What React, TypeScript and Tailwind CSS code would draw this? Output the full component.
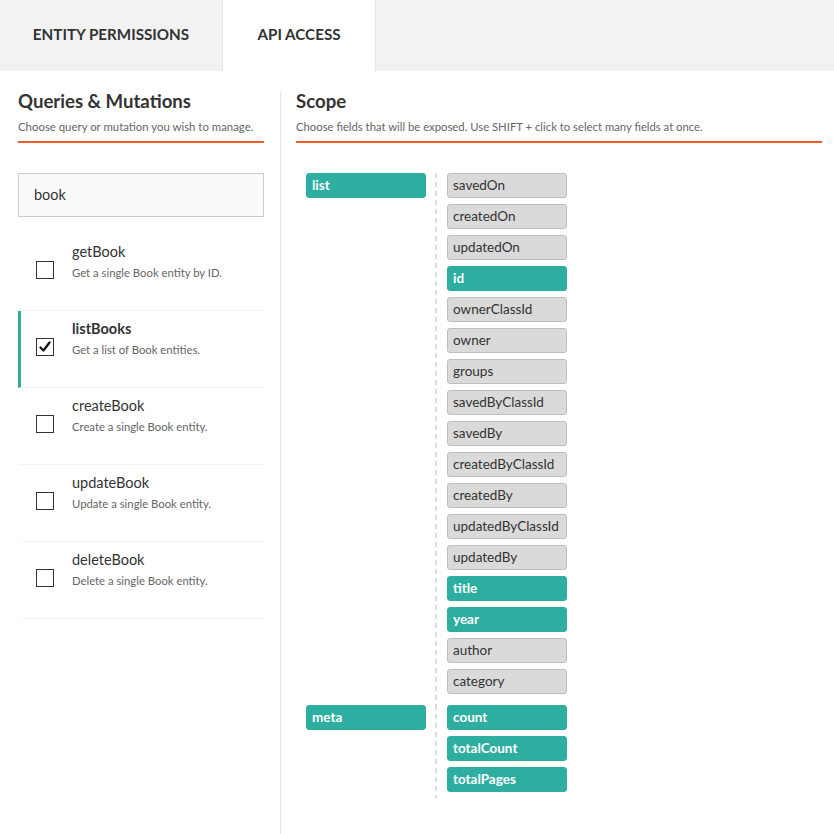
import React from "react";

const groups: { name: string; fields: { n: string; on: boolean }[] }[] = [
  {
    name: "list",
    fields: [
      { n: "savedOn", on: false },
      { n: "createdOn", on: false },
      { n: "updatedOn", on: false },
      { n: "id", on: true },
      { n: "ownerClassId", on: false },
      { n: "owner", on: false },
      { n: "groups", on: false },
      { n: "savedByClassId", on: false },
      { n: "savedBy", on: false },
      { n: "createdByClassId", on: false },
      { n: "createdBy", on: false },
      { n: "updatedByClassId", on: false },
      { n: "updatedBy", on: false },
      { n: "title", on: true },
      { n: "year", on: true },
      { n: "author", on: false },
      { n: "category", on: false },
    ],
  },
  {
    name: "meta",
    fields: [
      { n: "count", on: true },
      { n: "totalCount", on: true },
      { n: "totalPages", on: true },
    ],
  },
];

const items = [
  { t: "getBook", d: "Get a single Book entity by ID.", sel: false },
  { t: "listBooks", d: "Get a list of Book entities.", sel: true },
  { t: "createBook", d: "Create a single Book entity.", sel: false },
  { t: "updateBook", d: "Update a single Book entity.", sel: false },
  { t: "deleteBook", d: "Delete a single Book entity.", sel: false },
];

function Chip({ label, on }: { label: string; on: boolean }) {
  return on ? (
    <div className="h-[25px] w-[120px] rounded-[3px] bg-[#2eaea1] border border-[#2eaea1] px-[5px] text-[13.5px] leading-[23px] font-bold text-white">
      {label}
    </div>
  ) : (
    <div className="h-[25px] w-[120px] rounded-[3px] bg-[#dadada] border border-[#bebebe] px-[5px] text-[13.5px] leading-[23px] text-[#333]">
      {label}
    </div>
  );
}

export default function App() {
  return (
    <div
      className="w-[834px] h-[834px] bg-white overflow-hidden text-[#333]"
      style={{ fontFamily: "Lato, 'Noto Sans', sans-serif" }}
    >
      <div className="flex h-[71px] bg-[#f2f2f2]">
        <div className="w-[223px] flex items-center justify-center pb-[2px] text-[15.2px] font-bold text-[#333] border-r border-[#e6e6e6]">
          ENTITY PERMISSIONS
        </div>
        <div className="w-[153px] flex items-center justify-center pb-[2px] text-[15.2px] font-bold text-[#333] bg-white border-r border-[#e6e6e6]">
          API ACCESS
        </div>
      </div>
      <div className="flex">
        <div className="w-[246px] ml-[18px] pt-[18px]">
          <div className="text-[18.6px] leading-[24px] font-bold">Queries &amp; Mutations</div>
          <div className="text-[11.4px] leading-[16px] text-[#666] mt-[6px]">
            Choose query or mutation you wish to manage.
          </div>
          <div className="h-[2px] bg-[#f15a2b] mt-[6px]" />
          <div className="mt-[30px] h-[44px] border border-[#cccccc] bg-[#fafafa] pl-[15px] flex items-center text-[14.5px]">
            book
          </div>
          <div className="mt-[17px]">
            {items.map((it) => (
              <div
                key={it.t}
                className={`h-[77px] flex pt-[8px] border-b border-[#f2f2f2] border-l-[3px] pl-[15px] ${
                  it.sel ? "border-l-[#2eaea1]" : "border-l-transparent"
                }`}
              >
                <div className="w-[18px] h-[18px] mt-[19px] border border-[#333] bg-white flex items-center justify-center shrink-0">
                  {it.sel && (
                    <svg width="12" height="12" viewBox="0 0 12 12">
                      <path d="M1.5 6.5 L4.5 9.5 L10.5 1.5" fill="none" stroke="#111" strokeWidth="2.2" strokeLinecap="round" strokeLinejoin="round" />
                    </svg>
                  )}
                </div>
                <div className="ml-[18px]">
                  <div className={`text-[14.5px] leading-[20px] ${it.sel ? "font-bold" : ""}`}>{it.t}</div>
                  <div className="text-[11.3px] leading-[16px] text-[#666] mt-[3px]">{it.d}</div>
                </div>
              </div>
            ))}
          </div>
        </div>
        <div className="w-px bg-[#e6e6e6] ml-[16px] mt-[20px] h-[743px]" />
        <div className="w-[526px] ml-[15px] pt-[18px]">
          <div className="text-[18.6px] leading-[24px] font-bold">Scope</div>
          <div className="text-[11.3px] leading-[16px] text-[#666] mt-[6px]">
            Choose fields that will be exposed. Use SHIFT + click to select many fields at once.
          </div>
          <div className="h-[2px] bg-[#f15a2b] mt-[6px]" />
          <div className="mt-[30px] pl-[10px] flex flex-col">
            {groups.map((g, gi) => (
              <div key={g.name} className="flex">
                <Chip label={g.name} on={true} />
                <div className="ml-[9px] w-[2px] bg-[linear-gradient(to_bottom,#dddddd_5px,transparent_5px)] bg-[length:2px_9px]" />
                <div className={`ml-[10px] flex flex-col gap-[6px] ${gi === 0 ? "pb-[11px]" : "pb-[6px]"}`}>
                  {g.fields.map((f) => (
                    <Chip key={f.n} label={f.n} on={f.on} />
                  ))}
                </div>
              </div>
            ))}
          </div>
        </div>
      </div>
    </div>
  );
}
